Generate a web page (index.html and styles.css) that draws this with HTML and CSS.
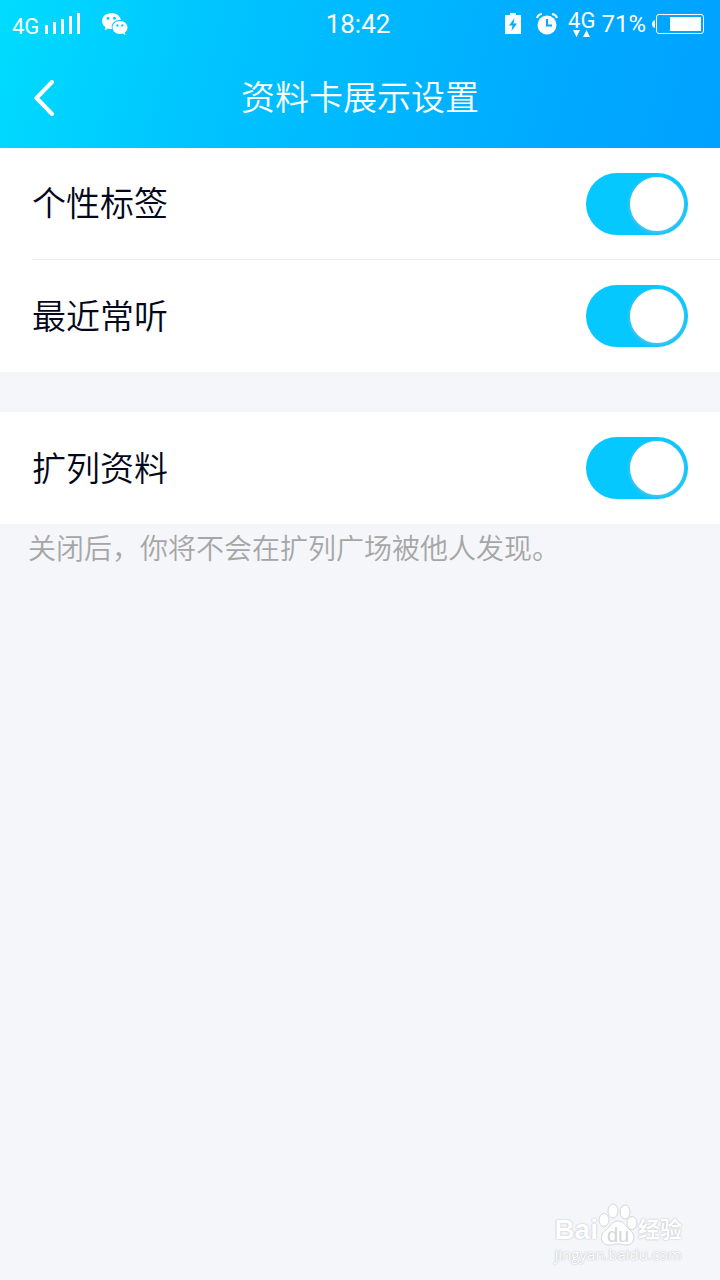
FILE: index.html
```html
<!DOCTYPE html>
<html lang="zh-CN">
<head>
    <meta charset="UTF-8">
    <meta name="viewport" content="width=device-width, initial-scale=1.0">
    <title>资料卡展示设置</title>
    <link rel="stylesheet" href="styles.css">
</head>
<body>

<header class="header">
    <div class="status-bar">
        <div class="status-side">
            <span class="network">4G</span>
            <svg class="signal" width="36" height="22" viewBox="0 0 36 22" fill="#fff">
                <rect x="0" y="12" width="3" height="9"/>
                <rect x="8" y="9" width="3" height="12"/>
                <rect x="16" y="6" width="3" height="15"/>
                <rect x="24" y="3" width="3" height="18"/>
                <rect x="32" y="0" width="3" height="21"/>
            </svg>
            <svg class="wechat" width="26" height="23" viewBox="0 0 26 23">
                <path fill="#fff" fill-rule="evenodd" d="M9.500 0C4.300 0 0 3.600 0 8c0 2.500 1.400 4.700 3.500 6.200L2.800 17.300 6 15.500c1.200.4 2.600.5 4 .5C8.500 11 12.500 6.800 19 6.800 18.200 2.900 14.200 0 9.500 0zM6 3.800a1.500 1.500 0 1 1 0 3 1.500 1.500 0 0 1 0-3zm6.500 0a1.500 1.500 0 1 1 0 3 1.500 1.500 0 0 1 0-3z"/>
                <path fill="#fff" fill-rule="evenodd" d="M18 8c-4.200 0-7.500 2.900-7.500 6.500S13.800 21 18 21c.9 0 1.800-.1 2.600-.4L23.500 22l-.7-2.600c1.700-1.200 2.700-2.900 2.700-4.900C25.500 10.900 22.200 8 18 8zm-2.600 3.200a1.200 1.200 0 1 1 0 2.400 1.200 1.200 0 0 1 0-2.400zm5 0a1.200 1.200 0 1 1 0 2.400 1.200 1.200 0 0 1 0-2.400z"/>
            </svg>
        </div>
        <div class="clock">18:42</div>
        <div class="status-side status-right">
            <svg width="16" height="22" viewBox="0 0 16 22">
                <path fill="#fff" fill-rule="evenodd" d="M5 0h6v2h5v19H0V2h5zM9.500 5L4 12.500h3.500L6.500 18 12 10.500H8.500z"/>
            </svg>
            <svg class="alarm" width="22" height="22" viewBox="0 0 22 22">
                <circle cx="11" cy="12" r="9.500" fill="#fff"/>
                <path d="M11 6v6.500h5" fill="none" stroke="#00a8ff" stroke-width="2"/>
                <path d="M1 5Q2 1.500 6 1M16 1q4 .5 5 4" fill="none" stroke="#fff" stroke-width="2"/>
            </svg>
            <div class="data">
                <span>4G</span>
                <svg width="18" height="7" viewBox="0 0 18 7" fill="#fff">
                    <path d="M0 0h7L3.500 7zM10 7h7L13.500 0z"/>
                </svg>
            </div>
            <span class="percent">71%</span>
            <svg class="battery" width="52" height="20" viewBox="0 0 52 20">
                <path d="M3 6v8Q0 13 0 10t3-4z" fill="#fff"/>
                <rect x="4.500" y=".5" width="47" height="19" rx="2.500" fill="none" stroke="#fff"/>
                <rect x="18" y="3" width="31" height="14" fill="#fff"/>
            </svg>
        </div>
    </div>
    <div class="title-bar">
        <button class="back" type="button" aria-label="返回">
            <svg width="20" height="36" viewBox="0 0 20 36">
                <path d="M18 2L2.500 18 18 34" fill="none" stroke="#fff" stroke-width="4" stroke-linecap="round" stroke-linejoin="round"/>
            </svg>
        </button>
        <h1>资料卡展示设置</h1>
    </div>
</header>

<main>
    <div class="group">
        <div class="row">
            <label for="tags">个性标签</label>
            <input type="checkbox" class="switch" id="tags" checked>
        </div>
        <div class="row">
            <label for="music">最近常听</label>
            <input type="checkbox" class="switch" id="music" checked>
        </div>
    </div>
    <div class="group">
        <div class="row">
            <label for="profile">扩列资料</label>
            <input type="checkbox" class="switch" id="profile" checked>
        </div>
    </div>
    <p class="hint">关闭后，你将不会在扩列广场被他人发现。</p>
</main>

<footer class="watermark">
    <div class="brand">
        <span class="bai">Bai</span>
        <svg class="paw" width="40" height="44" viewBox="0 0 40 44">
            <g fill="#fff" stroke="#d4d6da">
                <ellipse cx="6" cy="18" rx="5" ry="6.500"/>
                <ellipse cx="15" cy="9" rx="5" ry="7"/>
                <ellipse cx="27" cy="10" rx="5" ry="7"/>
                <ellipse cx="34" cy="21" rx="5" ry="6.500"/>
                <path d="M20 19c6 0 8 6 12 9 6 4 5 15-3 15-4 0-5-1-9-1s-5 1-9 1C2 43 1 32 8 28c4-3 6-9 12-9z"/>
            </g>
            <text class="du" x="20" y="40" text-anchor="middle">du</text>
        </svg>
        <span class="jingyan">经验</span>
    </div>
    <div class="site">jingyan.baidu.com</div>
</footer>

</body>
</html>
```

FILE: styles.css
```css
* {
    box-sizing: border-box;
}
body {
    margin: 0;
    min-height: 100vh;
    display: flex;
    flex-direction: column;
    background: #f4f6fa;
    color: #03081a;
    font-family: "Liberation Sans", "Noto Sans CJK SC", sans-serif;
    font-weight: 350;
}
.header {
    color: white;
    background: linear-gradient(105deg, #00dcff 0%, #00c4ff 30%, #00a8ff 80%, #00a2ff 100%);
}
.status-bar {
    height: 48px;
    padding: 0 16px 0 12px;
    display: grid;
    grid-template-columns: 1fr auto 1fr;
    align-items: center;
    font-family: Roboto, sans-serif;
    font-weight: 400;
}
.status-side {
    display: flex;
    align-items: center;
}
.status-right {
    justify-content: flex-end;
}
.network {
    font-size: 22px;
    line-height: 28px;
    padding-top: 6px;
}
.signal { margin-left: 6px; }
.wechat { margin-left: 21px; }
.clock {
    font-size: 26px;
    line-height: 48px;
}
.alarm { margin-left: 15px; }
.data {
    display: flex;
    flex-direction: column;
    align-items: center;
    margin-left: 10px;
    font-size: 22px;
    line-height: 18px;
}
.percent {
    font-size: 24px;
    margin: 0 6px;
}
.title-bar {
    height: 100px;
    padding: 0 32px;
    display: grid;
    grid-template-columns: 1fr auto 1fr;
    align-items: center;
}
.back {
    justify-self: start;
    display: flex;
    padding: 0 2px;
    border: none;
    background: none;
    cursor: pointer;
}
h1 {
    margin: 0;
    font-size: 34px;
    line-height: 48px;
    font-weight: 350;
}
.group {
    background: white;
    padding-left: 32px;
}
.group + .group { margin-top: 40px; }
.row {
    height: 112px;
    padding-right: 32px;
    display: flex;
    align-items: center;
    justify-content: space-between;
    font-size: 34px;
}
.row label { padding-bottom: 4px; }
.row:not(:last-child) { border-bottom: 1px solid #ebebee; }
.switch {
    appearance: none;
    width: 102px;
    height: 62px;
    margin: 0;
    padding: 4px;
    display: flex;
    border-radius: 31px;
    background: #d8dbe2;
    cursor: pointer;
}
.switch::before {
    content: "";
    width: 54px;
    height: 54px;
    border-radius: 50%;
    background: white;
    box-shadow: 0 1px 4px rgba(150, 190, 220, 0.8);
}
.switch:checked {
    justify-content: flex-end;
    background: #04c8ff;
}
.hint {
    margin: 0;
    padding: 6px 28px;
    color: #a6a6a6;
    font-size: 28px;
    line-height: 40px;
}
.watermark {
    margin: auto 38px 18px auto;
    color: white;
    text-shadow: 0 0 1px #b8babe, 0 0 2px #c8cace;
}
.brand {
    display: flex;
    align-items: flex-end;
    font-weight: 700;
}
.bai {
    font-size: 28px;
    line-height: 32px;
}
.paw { display: block; }
.du {
    font-size: 20px;
    fill: #d4d6da;
    font-weight: 400;
    text-shadow: none;
}
.jingyan {
    font-size: 22px;
    line-height: 32px;
}
.site {
    font-family: "Open Sans", sans-serif;
    font-size: 15px;
    line-height: 16px;
    font-weight: 400;
}
```
